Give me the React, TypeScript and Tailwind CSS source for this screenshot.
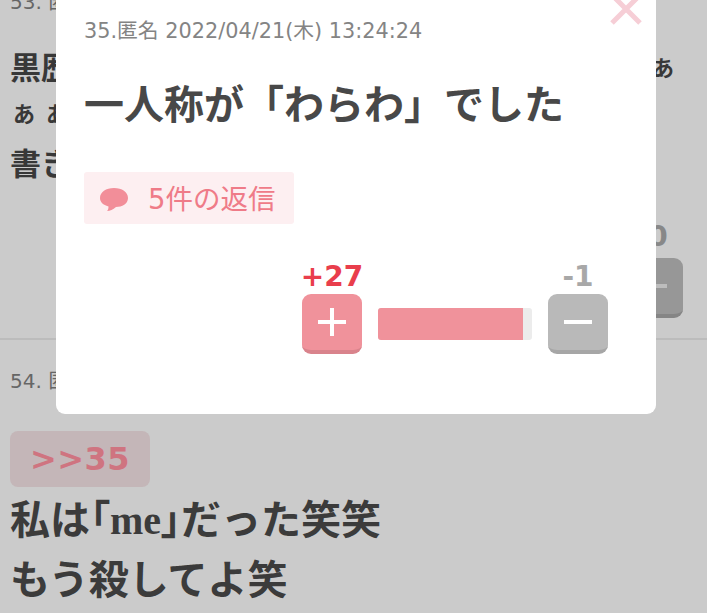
import React from 'react';

const latin = "font-['DejaVu_Sans','Noto_Sans_CJK_JP',sans-serif]";
const body = "font-['Noto_Sans_CJK_JP',sans-serif]";

const VoteButton: React.FC<{ kind: 'plus' | 'minus' }> = ({ kind }) => (
  <div
    className={`w-[60px] h-[60px] rounded-[9px] flex items-center justify-center border-b-[4px] ${
      kind === 'plus' ? 'bg-[#f0929b] border-[#d9838c]' : 'bg-[#b9b9b9] border-[#a6a6a6]'
    }`}
  >
    <svg width="30" height="30" viewBox="0 0 30 30">
      <rect x="1" y="13" width="28" height="4" fill="#fff" />
      {kind === 'plus' && <rect x="13" y="1" width="4" height="28" fill="#fff" />}
    </svg>
  </div>
);

const Modal: React.FC = () => (
  <div className="absolute left-[56px] top-0 w-[600px] h-[414px] bg-white rounded-b-[9px] px-[28px] pt-[17px]">
    <svg width="34" height="34" viewBox="0 0 34 34" className="absolute left-[553px] top-[-8px]">
      <path d="M3 3 L31 31 M31 3 L3 31" stroke="#f6ced6" strokeWidth="5" fill="none" />
    </svg>
    <p className={`${latin} text-[20.800px] leading-[28px] text-[#848484] whitespace-nowrap`}>35.匿名 2022/04/21(木) 13:24:24</p>
    <h2 className={`${body} text-[40px] leading-[58px] font-bold text-[#484848] mt-[28px] whitespace-nowrap`}>一人称が「わらわ」でした</h2>
    <div className="mt-[41px] w-[210px] h-[52px] bg-[#fdeff1] rounded-[3px] flex items-center pl-[15px]">
      <svg width="30" height="26" viewBox="0 0 30 26" className="mt-[2px]">
        <path d="M15 2 C23 2 29 6 29 12 C29 18 23 21 17 21 C14 23.500 11 25 8 25 C9 24 9.500 22.500 9.500 20.500 C4 19 1 16 1 12 C1 6 7 2 15 2 Z" fill="#f28e99" />
      </svg>
      <span className={`${latin} text-[27.500px] leading-none text-[#ef7b88] ml-[19px] mt-[4px] whitespace-nowrap`}>5件の返信</span>
    </div>
    <div className="mt-[36px] ml-[218px] flex items-start gap-[16px]">
      <div className="w-[60px] flex flex-col items-center">
        <span className={`${latin} text-[28px] leading-[33px] font-bold text-[#e93e4c] mb-[1px]`}>+27</span>
        <VoteButton kind="plus" />
      </div>
      <div className="mt-[48px] w-[154px] h-[32px] bg-[#ececec] rounded-[3px] overflow-hidden">
        <div className="h-full w-[145px] bg-[#f0929b]" />
      </div>
      <div className="w-[60px] flex flex-col items-center">
        <span className={`${latin} text-[28px] leading-[33px] font-bold text-[#a8a8a8] mb-[1px]`}>-1</span>
        <VoteButton kind="minus" />
      </div>
    </div>
  </div>
);

export default function App() {
  return (
    <div className="relative w-[707px] h-[613px] overflow-hidden bg-[#cbcbcb]">
      {/* page behind the overlay */}
      <div className="mt-[-12px] px-[10px]">
        <p className={`${latin} text-[20px] leading-[28px] text-[#666]`}>53. 匿名</p>
        <div className={`${body} font-bold text-[#383838] mt-[27px] relative`}>
          <p className="text-[31px] leading-[46px]">黒歴史</p>
          <p className="text-[22px] leading-[46px] ml-[3px] mb-[1px] tracking-[11px]">ああ</p>
          <p className="text-[31px] leading-[52px]">書き</p>
          <span className="absolute left-[642px] top-[9px] text-[22px] leading-[28px]">あ</span>
        </div>
        <div className="flex justify-end mt-[32px] mr-[14px]">
          <div className="flex flex-col items-center w-[60px]">
            <span className={`${latin} text-[28px] leading-[33px] font-bold text-[#888] ml-[10px]`}>0</span>
            <div className="mt-[5px] w-[60px] h-[60px] rounded-[9px] bg-[#979797] border-b-[4px] border-[#858585] flex items-center justify-center">
              <div className="w-[28px] h-[4px] bg-[#bdbdbd]" />
            </div>
          </div>
        </div>
      </div>
      <div className="mt-[20px] border-t-2 border-[#bcbcbc] px-[10px] pt-[27px]">
        <p className={`${latin} text-[20px] leading-[28px] text-[#666]`}>54. 匿名</p>
        <div className="mt-[36px] w-[140px] h-[56px] bg-[#c4b6b8] rounded-[8px] flex items-center justify-center">
          <span className={`${latin} text-[32px] leading-none font-bold text-[#cf7480] tracking-[0.5px]`}>&gt;&gt;35</span>
        </div>
        <div className={`${body} text-[40px] leading-[56px] font-bold text-[#3b3b3b] mt-[2px]`}>
          <p className="whitespace-nowrap">
            私は<span className="[font-feature-settings:'palt']">「</span>
            <span className="font-['Liberation_Serif',serif]">me</span>
            <span className="[font-feature-settings:'palt']">」</span>だった笑笑
          </p>
          <p className="whitespace-nowrap">もう殺してよ笑</p>
        </div>
      </div>
      <Modal />
    </div>
  );
}
